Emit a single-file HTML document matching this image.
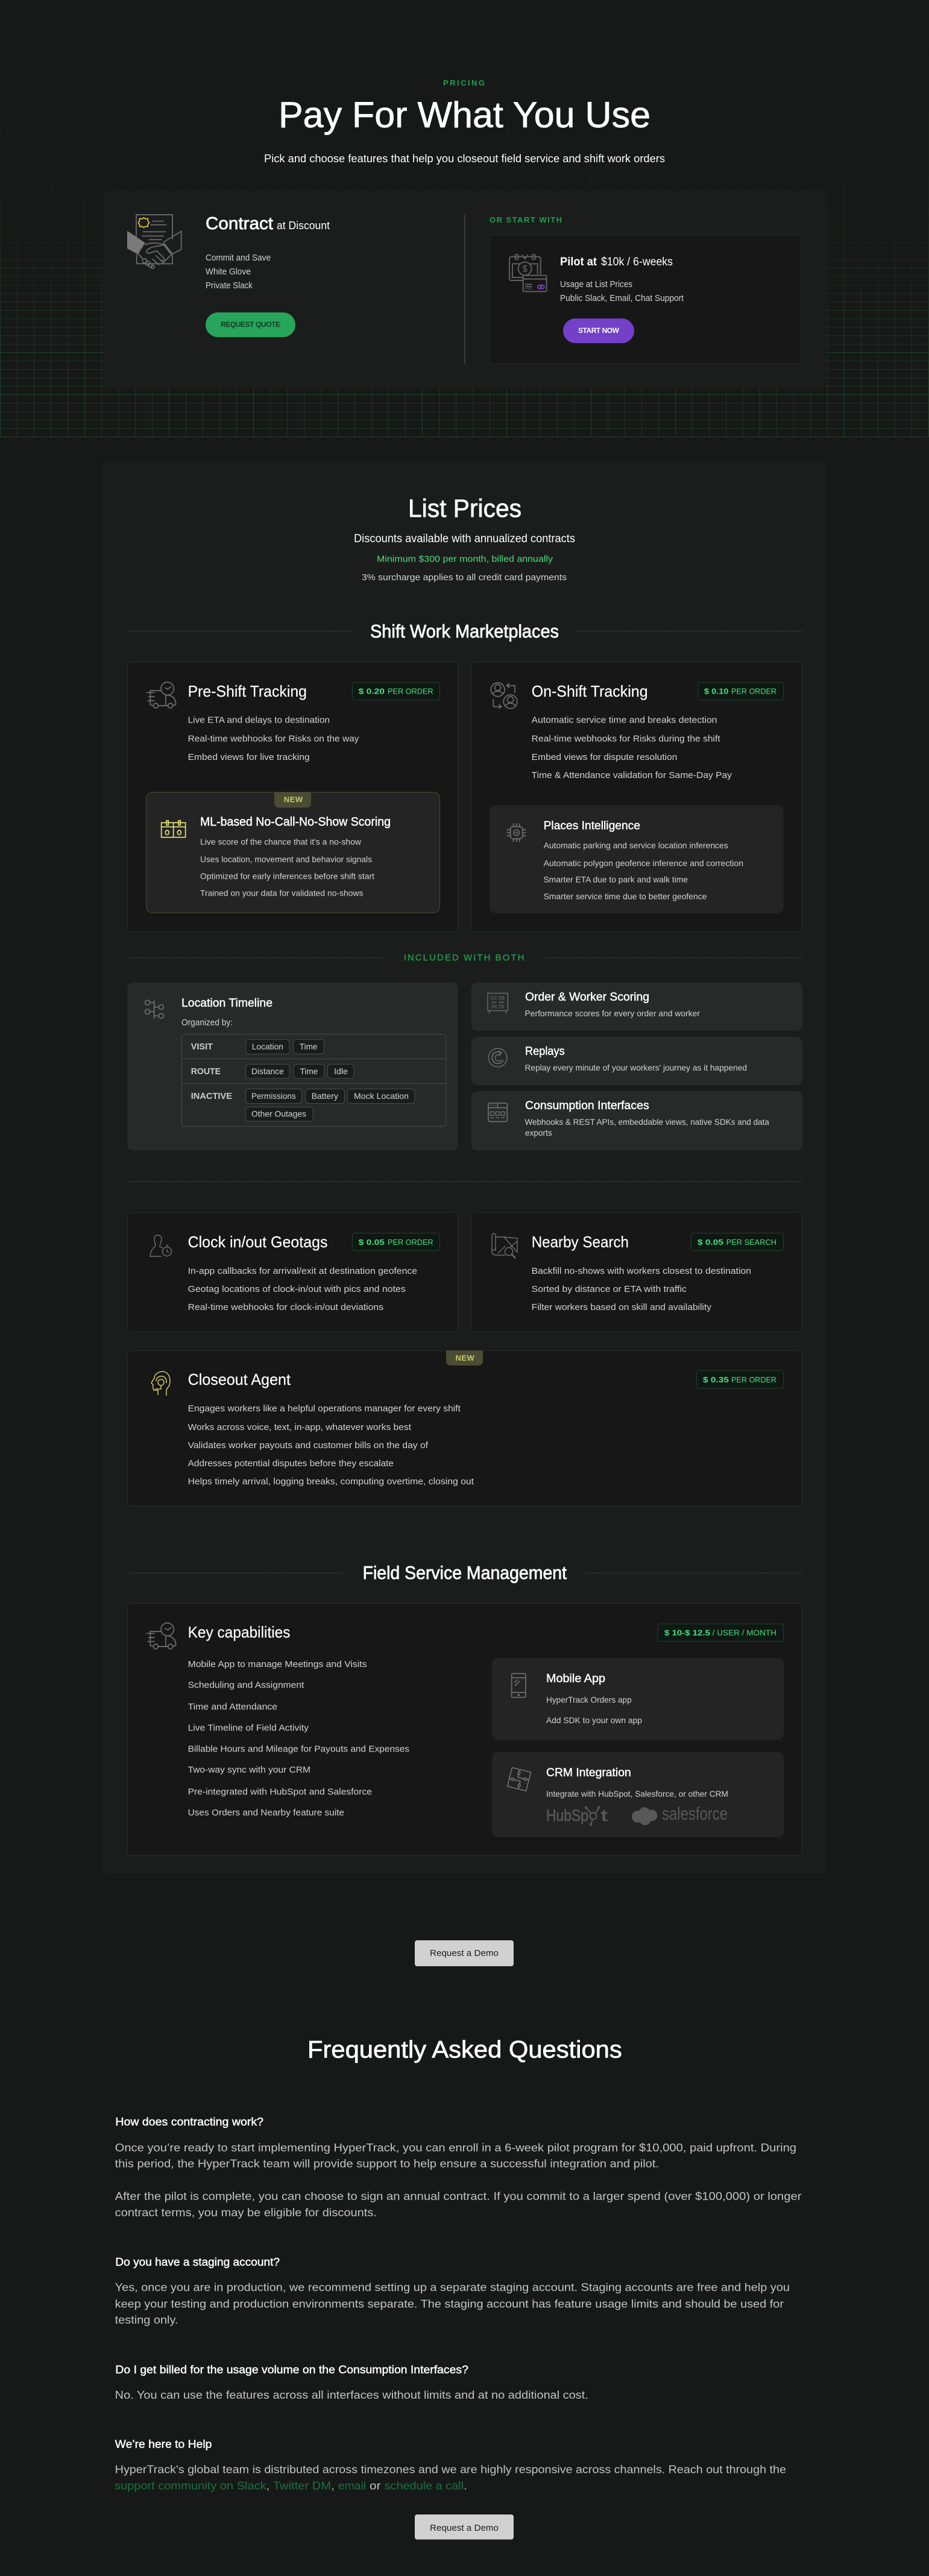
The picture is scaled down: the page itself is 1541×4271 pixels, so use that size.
<!DOCTYPE html>
<html lang="en"><head><meta charset="utf-8"><title>Pricing</title>
<style>
html,body{margin:0;padding:0;background:#161918}
svg{display:block;font-family:"Liberation Sans",sans-serif}
.w{fill:#fff}
.w.f26{stroke:#fff;stroke-width:.2px}
.wm{fill:#fff;stroke:#fff;stroke-width:.45px}
.wl{fill:#fff;stroke:#fff;stroke-width:.75px}
.wb{fill:#fff;font-weight:700}
.l{fill:#d2d2d2}
.p{fill:#c2c4c3}
.g{fill:#1fa04f;font-weight:700}
.gr{fill:#4ade80}
.grb{fill:#4ade80;font-weight:700}
.lk{fill:#1d7040}
.bg{fill:#171717;stroke:#2a2c2b;stroke-width:1}
.bx{fill:#242424}
.bd{fill:#0f1913;stroke:#24402f;stroke-width:1}
.tag{fill:#1b1d1c;stroke:#4a4c4b;stroke-width:1}
.ic{fill:none;stroke:#707070}
.y{fill:none;stroke:#e8e67d}
.dot{stroke:#3d3f3e;stroke-width:1.5;stroke-dasharray:1.5 1.5}
.f15{font-size:15px}.f14{font-size:14px}.f13{font-size:13px}.f18{font-size:18px}.f19{font-size:19px}.f20{font-size:20px}.f26{font-size:26px}.f31{font-size:31px}
</style></head>
<body>
<svg xmlns="http://www.w3.org/2000/svg" width="1541" height="4271" viewBox="0 0 1541 4271">
<defs>
<pattern id="gm" patternUnits="userSpaceOnUse" width="28" height="14" x="0" y="10"><path d="M.5 0V14M0 .5H28" fill="none" stroke="#1c3626" stroke-width="1"/></pattern>
<pattern id="gM" patternUnits="userSpaceOnUse" width="140" height="70" x="0" y="24"><path d="M.5 0V70M0 .5H140" fill="none" stroke="#1e4229" stroke-width="1"/></pattern>
<linearGradient id="fd" x1="0" y1="0" x2="0" y2="1"><stop offset=".12" stop-color="#000"/><stop offset=".5" stop-color="#555"/><stop offset=".85" stop-color="#fff"/></linearGradient>
<mask id="mk" maskUnits="userSpaceOnUse" x="0" y="0" width="1541" height="725"><rect width="1541" height="725" fill="url(#fd)"/></mask>
</defs>
<rect width="1541" height="4271" fill="#161918"/>
<g mask="url(#mk)"><rect width="1541" height="725" fill="url(#gm)"/><rect width="1541" height="725" fill="url(#gM)"/></g>

<!-- HERO -->
<text x="735" y="142" class="g f13" textLength="69" lengthAdjust="spacing">PRICING</text>
<text x="462" y="211" class="wl" font-size="60" textLength="617" lengthAdjust="spacingAndGlyphs">Pay For What You Use</text>
<text x="438" y="269" class="w f18" textLength="665" lengthAdjust="spacingAndGlyphs">Pick and choose features that help you closeout field service and shift work orders</text>

<rect x="172" y="316" width="1198" height="328" rx="6" fill="#1b1d1c"/>
<g transform="translate(190,330) scale(.3333)" class="ic" stroke-width="5">
<path d="M108 215V78H288V200M110 275V322H288V275"/>
<path d="M188 110H245M178 128H258M140 163H255M135 184H245M170 202H235"/>
<path d="M63 158L152 218L117 275L63 246Z" fill="#7a7a7a" stroke="none"/>
<path d="M243 215L332 160V250L285 274"/>
<path d="M243 220L283 272" stroke-width="11"/>
<path d="M150 228C170 218 220 214 243 228C225 235 195 232 175 245C152 258 155 275 178 268C190 262 200 262 210 258L247 295C252 302 240 310 233 305M285 274L235 325M205 280L240 315M188 298L222 328M118 272L140 298"/>
<circle cx="150" cy="308" r="11"/><circle cx="165" cy="320" r="11"/><circle cx="178" cy="330" r="10"/><circle cx="190" cy="338" r="8"/>
<path d="M145 93l9 6 11-2 1 11 6 9-6 9-1 11-11-1-9 6-9-6-11 1-1-11-6-9 6-9 1-11 11 2z" stroke="#e8c93c"/>
</g>
<text x="341" y="380" class="wl" font-size="29" textLength="112" lengthAdjust="spacingAndGlyphs">Contract</text>
<text x="459" y="380" class="w f18" textLength="88" lengthAdjust="spacingAndGlyphs">at Discount</text>
<text x="341" y="432" class="l f15" textLength="108" lengthAdjust="spacingAndGlyphs">Commit and Save</text>
<text x="341" y="455" class="l f15" textLength="75" lengthAdjust="spacingAndGlyphs">White Glove</text>
<text x="341" y="478" class="l f15" textLength="78" lengthAdjust="spacingAndGlyphs">Private Slack</text>
<rect x="341" y="518" width="149" height="41" rx="20.5" fill="#26a55b"/>
<text x="366" y="542" font-size="12" font-weight="700" fill="#0f3d20" textLength="99" lengthAdjust="spacing">REQUEST QUOTE</text>

<rect x="770" y="356" width="1.5" height="248" fill="#454746"/>
<text x="812" y="369" class="g" font-size="13" textLength="120" lengthAdjust="spacing">OR START WITH</text>
<rect x="812.5" y="389.5" width="517" height="214" rx="6" class="bg"/>
<g transform="translate(800,340) scale(.3333)" class="ic" stroke-width="6" style="stroke:#5f5f5f">
<path d="M200 375H147Q135 375 135 363V270Q135 257 147 257H278Q290 257 290 270V345M150 292H275V345M150 292V360H200"/>
<rect x="163" y="245" width="16" height="26" rx="8"/><rect x="248" y="245" width="16" height="26" rx="8"/>
<path d="M197 247L212 268L227 247"/>
<circle cx="212" cy="316" r="33" style="fill:#171717"/>
<rect x="203" y="350" width="117" height="80" rx="5" style="fill:#171717"/>
<path d="M203 368H320M213 395H248M213 406H248M213 417H218M226 417H231M238 417H243"/>
<path d="M212 298V334M222 306C218 299 203 300 203 309C203 320 222 313 222 324C222 333 206 333 202 326" stroke-width="4"/>
<circle cx="285" cy="407" r="9" style="stroke:#7340c8"/><circle cx="299" cy="407" r="9" style="stroke:#7340c8"/>
</g>
<text x="929" y="440" class="wb f19" textLength="61" lengthAdjust="spacingAndGlyphs">Pilot at</text>
<text x="997" y="440" class="w f19" textLength="119" lengthAdjust="spacingAndGlyphs">$10k / 6-weeks</text>
<text x="929" y="476" class="l f15" textLength="120" lengthAdjust="spacingAndGlyphs">Usage at List Prices</text>
<text x="929" y="499" class="l f15" textLength="205" lengthAdjust="spacingAndGlyphs">Public Slack, Email, Chat Support</text>
<rect x="934" y="528" width="118" height="41" rx="20.5" fill="#7340c8"/>
<text x="959" y="552" font-size="12" font-weight="700" fill="#fff" textLength="68" lengthAdjust="spacing">START NOW</text>

<!-- LIST PRICES PANEL -->
<rect x="170" y="764" width="1201" height="2343" rx="6" fill="#1b1d1c"/>
<text x="677" y="857" class="wl" font-size="42" textLength="188" lengthAdjust="spacingAndGlyphs">List Prices</text>
<text x="587" y="899" class="w f19" textLength="367" lengthAdjust="spacingAndGlyphs">Discounts available with annualized contracts</text>
<text x="625" y="931.5" class="gr f15" textLength="292" lengthAdjust="spacingAndGlyphs">Minimum $300 per month, billed annually</text>
<text x="600" y="962" class="l f15" textLength="340" lengthAdjust="spacingAndGlyphs">3% surcharge applies to all credit card payments</text>

<path class="dot" d="M211 1046.5H583M957 1046.5H1331"/>
<text x="614" y="1057" class="wl f31" textLength="313" lengthAdjust="spacingAndGlyphs">Shift Work Marketplaces</text>

<!-- Pre-Shift -->
<rect x="211.5" y="1097.5" width="548" height="447" rx="6" class="bg"/>
<g transform="translate(220,1100) scale(.3333)" class="ic" stroke-width="5">
<circle cx="173" cy="125" r="32"/><path d="M160 120L175 128L192 115"/>
<path d="M142 135H88V205L100 210M165 157V210M68 145H110M78 165H110M72 185H110M127 210H176M165 157C200 157 215 175 215 205L201 210"/>
<circle cx="115" cy="210" r="12"/><circle cx="188" cy="210" r="12"/>
</g>
<text x="311.6" y="1155" class="w f26" textLength="197.4" lengthAdjust="spacingAndGlyphs">Pre-Shift Tracking</text>
<rect x="584.5" y="1131.5" width="145" height="29" rx="4" class="bd"/>
<text x="594.7" y="1150.5" class="grb f13" textLength="43.3" lengthAdjust="spacingAndGlyphs">$ 0.20</text>
<text x="643" y="1150.5" class="gr f13" textLength="75.7" lengthAdjust="spacingAndGlyphs">PER ORDER</text>
<text x="311.6" y="1198.7" class="l f15" textLength="235.4" lengthAdjust="spacingAndGlyphs">Live ETA and delays to destination</text>
<text x="311.6" y="1229.7" class="l f15" textLength="283.9" lengthAdjust="spacingAndGlyphs">Real-time webhooks for Risks on the way</text>
<text x="311.6" y="1260" class="l f15" textLength="202" lengthAdjust="spacingAndGlyphs">Embed views for live tracking</text>

<rect x="242.5" y="1313.5" width="487" height="200" rx="10" class="bx" stroke="#4a4c33"/>
<path d="M455 1313H516V1331Q516 1339 508 1339H463Q455 1339 455 1331Z" fill="#4a4c33"/>
<text x="470.7" y="1330" font-size="13" font-weight="700" fill="#c6c96a" textLength="31.3" lengthAdjust="spacing">NEW</text>
<g transform="translate(220,1100) scale(.3333)" class="y" stroke-width="5">
<rect x="143" y="792" width="120" height="73"/><path d="M203 792V865M143 813H263"/>
<rect x="168" y="782" width="10" height="22"/><rect x="228" y="782" width="10" height="22"/>
<ellipse cx="172" cy="841" rx="9" ry="11"/><ellipse cx="232" cy="841" rx="9" ry="11"/>
</g>
<text x="332" y="1369" class="wm f20" textLength="316" lengthAdjust="spacingAndGlyphs">ML-based No-Call-No-Show Scoring</text>
<text x="332" y="1400.5" class="l f14" textLength="267" lengthAdjust="spacingAndGlyphs">Live score of the chance that it's a no-show</text>
<text x="332" y="1429.6" class="l f14" textLength="285" lengthAdjust="spacingAndGlyphs">Uses location, movement and behavior signals</text>
<text x="332" y="1457.7" class="l f14" textLength="289" lengthAdjust="spacingAndGlyphs">Optimized for early inferences before shift start</text>
<text x="332" y="1485.7" class="l f14" textLength="270.4" lengthAdjust="spacingAndGlyphs">Trained on your data for validated no-shows</text>

<!-- On-Shift -->
<rect x="781.5" y="1097.5" width="549" height="447" rx="6" class="bg"/>
<g transform="translate(800,1100) scale(.3333)" class="ic" stroke-width="5">
<circle cx="77" cy="130" r="34"/><circle cx="77" cy="120" r="15"/><path d="M52 155C56 132 98 132 102 155"/>
<circle cx="140" cy="190" r="34"/><circle cx="140" cy="180" r="15"/><path d="M115 215C119 192 161 192 165 215"/>
<path d="M162 147V110H125M135 98L122 110L135 122M55 175V215H92M82 203L95 215L82 225"/>
</g>
<text x="881.7" y="1155" class="w f26" textLength="192.9" lengthAdjust="spacingAndGlyphs">On-Shift Tracking</text>
<rect x="1157.5" y="1131.5" width="142" height="29" rx="4" class="bd"/>
<text x="1168" y="1150.5" class="grb f13" textLength="40.5" lengthAdjust="spacingAndGlyphs">$ 0.10</text>
<text x="1213" y="1150.5" class="gr f13" textLength="75" lengthAdjust="spacingAndGlyphs">PER ORDER</text>
<text x="881.7" y="1198.7" class="l f15" textLength="307.7" lengthAdjust="spacingAndGlyphs">Automatic service time and breaks detection</text>
<text x="881.7" y="1229.7" class="l f15" textLength="313" lengthAdjust="spacingAndGlyphs">Real-time webhooks for Risks during the shift</text>
<text x="881.7" y="1260" class="l f15" textLength="241.8" lengthAdjust="spacingAndGlyphs">Embed views for dispute resolution</text>
<text x="881.7" y="1290" class="l f15" textLength="332.2" lengthAdjust="spacingAndGlyphs">Time &amp; Attendance validation for Same-Day Pay</text>

<rect x="812" y="1335" width="487.6" height="179" rx="10" class="bx"/>
<g transform="translate(800,1100) scale(.3333)" class="ic" stroke-width="5">
<rect x="140" y="812" width="60" height="60" rx="12"/><circle cx="170" cy="842" r="14"/><path d="M163 842H177"/>
<path d="M155 795V812M170 795V812M185 795V812M155 872V888M170 872V888M185 872V888M122 827H140M122 842H140M122 857H140M200 827H217M200 842H217M200 857H217"/>
</g>
<text x="901.6" y="1375" class="wm f19" textLength="160.4" lengthAdjust="spacingAndGlyphs">Places Intelligence</text>
<text x="901.6" y="1406.6" class="l f14" textLength="306.1" lengthAdjust="spacingAndGlyphs">Automatic parking and service location inferences</text>
<text x="901.6" y="1436" class="l f14" textLength="331.4" lengthAdjust="spacingAndGlyphs">Automatic polygon geofence inference and correction</text>
<text x="901.6" y="1463" class="l f14" textLength="239.4" lengthAdjust="spacingAndGlyphs">Smarter ETA due to park and walk time</text>
<text x="901.6" y="1491" class="l f14" textLength="270.9" lengthAdjust="spacingAndGlyphs">Smarter service time due to better geofence</text>

<!-- Included -->
<path class="dot" d="M211 1588H640M901 1588H1331"/>
<text x="669.7" y="1592.4" font-size="15" fill="#1fa04f" stroke="#1fa04f" stroke-width=".3" textLength="199.8" lengthAdjust="spacing">INCLUDED WITH BOTH</text>

<rect x="211" y="1629" width="549" height="278.5" rx="10" fill="#282a29"/>
<g transform="translate(220,1620) scale(.3333)" class="ic" stroke-width="5">
<path d="M107 115V208M86 127H107M86 172H107M107 149H130M107 193H130"/>
<circle cx="74" cy="127" r="12"/><circle cx="74" cy="172" r="12"/><circle cx="142" cy="149" r="12"/><circle cx="142" cy="193" r="12"/>
</g>
<text x="301" y="1669" class="wm f19" textLength="151" lengthAdjust="spacingAndGlyphs">Location Timeline</text>
<text x="301" y="1700" class="l f15" textLength="85" lengthAdjust="spacingAndGlyphs">Organized by:</text>
<rect x="301.5" y="1714.5" width="438.5" height="153" rx="6" fill="none" stroke="#4a4c4b"/>
<path d="M302 1755.5H740M302 1796.5H740" stroke="#4a4c4b"/>
<text x="316.7" y="1740" class="f15" fill="#ccc" font-weight="700" textLength="36.3" lengthAdjust="spacingAndGlyphs">VISIT</text>
<text x="316.7" y="1781" class="f15" fill="#ccc" font-weight="700" textLength="49.3" lengthAdjust="spacingAndGlyphs">ROUTE</text>
<text x="316.7" y="1822" class="f15" fill="#ccc" font-weight="700" textLength="68.3" lengthAdjust="spacingAndGlyphs">INACTIVE</text>

<rect x="407.5" y="1723.5" width="72.5" height="24" rx="5" class="tag"/><text x="417.7" y="1740" class="l f14" textLength="52.3" lengthAdjust="spacingAndGlyphs">Location</text>
<rect x="486.5" y="1723.5" width="51" height="24" rx="5" class="tag"/><text x="496.8" y="1740" class="l f14" textLength="29.8" lengthAdjust="spacingAndGlyphs">Time</text>
<rect x="407.5" y="1764.5" width="72.5" height="23.5" rx="5" class="tag"/><text x="417" y="1781" class="l f14" textLength="53.8" lengthAdjust="spacingAndGlyphs">Distance</text>
<rect x="487" y="1764.5" width="51" height="23.5" rx="5" class="tag"/><text x="497.5" y="1781" class="l f14" textLength="29.9" lengthAdjust="spacingAndGlyphs">Time</text>
<rect x="543.5" y="1764.5" width="43.5" height="23.5" rx="5" class="tag"/><text x="554" y="1781" class="l f14" textLength="23" lengthAdjust="spacingAndGlyphs">Idle</text>
<rect x="407.5" y="1805.5" width="93" height="24" rx="5" class="tag"/><text x="417" y="1822" class="l f14" textLength="73.7" lengthAdjust="spacingAndGlyphs">Permissions</text>
<rect x="506.5" y="1805.5" width="65" height="24" rx="5" class="tag"/><text x="516.7" y="1822" class="l f14" textLength="44.3" lengthAdjust="spacingAndGlyphs">Battery</text>
<rect x="576.5" y="1805.5" width="111.5" height="24" rx="5" class="tag"/><text x="587" y="1822" class="l f14" textLength="91" lengthAdjust="spacingAndGlyphs">Mock Location</text>
<rect x="407.5" y="1835.5" width="111.5" height="23.5" rx="5" class="tag"/><text x="417" y="1851.7" class="l f14" textLength="91" lengthAdjust="spacingAndGlyphs">Other Outages</text>

<rect x="781.5" y="1629" width="549.5" height="80" rx="10" fill="#282a29"/>
<rect x="781.5" y="1719" width="549.5" height="80" rx="10" fill="#282a29"/>
<rect x="781.5" y="1809" width="549.5" height="98.5" rx="10" fill="#282a29"/>
<g transform="translate(790,1620) scale(.3333)" class="ic" stroke-width="4">
<rect x="57" y="80" width="100" height="87"/><path d="M65 167V182M148 167V182M75 125H100M112 125H138"/>
<text x="71" y="112" font-size="26" fill="#707070" stroke="none" textLength="70" lengthAdjust="spacingAndGlyphs">02:28</text>
<text x="73" y="155" font-size="26" fill="#707070" stroke="none" textLength="66" lengthAdjust="spacingAndGlyphs">38 26</text>
<circle cx="107" cy="401" r="46"/>
<path d="M122 376A29 29 0 1 0 134 412M110 368L125 376L113 392" stroke-width="5"/>
<path d="M118 388A16 16 0 1 0 122 412"/>
<rect x="60" y="627" width="94" height="92" rx="8" stroke-width="5"/><path d="M60 650H154M106 627V650" stroke-width="5"/>
<path d="M70 638H75M81 638H86M92 638H97"/>
<rect x="70" y="670" width="18" height="18" rx="2"/><rect x="97" y="670" width="18" height="18" rx="2"/><rect x="124" y="670" width="18" height="18" rx="2"/>
<path d="M70 700H88M97 700H115M124 700H142"/>
</g>
<text x="871" y="1659" class="wm f19" textLength="206" lengthAdjust="spacingAndGlyphs">Order &amp; Worker Scoring</text>
<text x="870.5" y="1685" class="l f14" textLength="290.5" lengthAdjust="spacingAndGlyphs">Performance scores for every order and worker</text>
<text x="871" y="1749" class="wm f19" textLength="65.7" lengthAdjust="spacingAndGlyphs">Replays</text>
<text x="870.5" y="1775" class="l f14" textLength="368.5" lengthAdjust="spacingAndGlyphs">Replay every minute of your workers' journey as it happened</text>
<text x="871" y="1839" class="wm f19" textLength="205.7" lengthAdjust="spacingAndGlyphs">Consumption Interfaces</text>
<text x="870.5" y="1865" class="l f14" textLength="405.4" lengthAdjust="spacingAndGlyphs">Webhooks &amp; REST APIs, embeddable views, native SDKs and data</text>
<text x="871" y="1883" class="l f14" textLength="44.7" lengthAdjust="spacingAndGlyphs">exports</text>

<path class="dot" d="M211 1959H1331"/>

<!-- Clock -->
<rect x="211.5" y="2010.5" width="548" height="197" rx="6" class="bg"/>
<g class="ic" stroke-width="1.4">
<path d="M256 2053C256 2046 268 2046 268 2054C268 2060 265 2063 265 2067L270 2069M256 2053C256 2060 258 2062 258 2066C254 2069 250 2073 249 2083H268"/>
<circle cx="277" cy="2075" r="7.5"/><path d="M277 2071V2075L280 2077M275 2065H279"/>
</g>
<text x="311.6" y="2068" class="w f26" textLength="231.9" lengthAdjust="spacingAndGlyphs">Clock in/out Geotags</text>
<rect x="584.5" y="2044.5" width="145" height="29" rx="4" class="bd"/>
<text x="594.7" y="2063.8" class="grb f13" textLength="43.3" lengthAdjust="spacingAndGlyphs">$ 0.05</text>
<text x="643" y="2063.8" class="gr f13" textLength="75.7" lengthAdjust="spacingAndGlyphs">PER ORDER</text>
<text x="311.6" y="2112" class="l f15" textLength="380.4" lengthAdjust="spacingAndGlyphs">In-app callbacks for arrival/exit at destination geofence</text>
<text x="311.6" y="2142" class="l f15" textLength="361.2" lengthAdjust="spacingAndGlyphs">Geotag locations of clock-in/out with pics and notes</text>
<text x="311.6" y="2172" class="l f15" textLength="324.4" lengthAdjust="spacingAndGlyphs">Real-time webhooks for clock-in/out deviations</text>

<!-- Nearby -->
<rect x="781.5" y="2010.5" width="549" height="197" rx="6" class="bg"/>
<g class="ic" stroke-width="1.4">
<path d="M816 2048C816 2044 822 2044 822 2048V2074C822 2071 816 2071 816 2075ZM822 2051H836L858 2053V2077M816 2075C816 2080 820 2081 824 2081H838M836 2051L858 2076M858 2058L846 2068M838 2066L826 2078"/>
<circle cx="844" cy="2075" r="6.5"/><path d="M849 2080L855 2086" stroke-width="2.4"/>
</g>
<text x="881.7" y="2068" class="w f26" textLength="161.3" lengthAdjust="spacingAndGlyphs">Nearby Search</text>
<rect x="1146.5" y="2044.5" width="153" height="29" rx="4" class="bd"/>
<text x="1157" y="2063.8" class="grb f13" textLength="43" lengthAdjust="spacingAndGlyphs">$ 0.05</text>
<text x="1204.7" y="2063.8" class="gr f13" textLength="83.3" lengthAdjust="spacingAndGlyphs">PER SEARCH</text>
<text x="881.7" y="2112" class="l f15" textLength="364.3" lengthAdjust="spacingAndGlyphs">Backfill no-shows with workers closest to destination</text>
<text x="881.7" y="2142" class="l f15" textLength="257.2" lengthAdjust="spacingAndGlyphs">Sorted by distance or ETA with traffic</text>
<text x="881.7" y="2172" class="l f15" textLength="298.3" lengthAdjust="spacingAndGlyphs">Filter workers based on skill and availability</text>

<!-- Closeout -->
<rect x="211.5" y="2239.5" width="1119" height="257.5" rx="6" class="bg"/>
<path d="M740 2239H801V2256Q801 2264 793 2264H748Q740 2264 740 2256Z" fill="#4a4c33"/>
<text x="755.5" y="2255.8" font-size="13" font-weight="700" fill="#c6c96a" textLength="31.3" lengthAdjust="spacing">NEW</text>
<g class="y" stroke-width="1.3">
<path d="M262 2313V2305H255Q253 2300 254 2296L251 2293L256 2285C256 2277 265 2274 270 2274C278 2274 282 2282 282 2290C282 2297 279 2300 276 2304V2314"/>
<circle cx="267" cy="2292" r="5"/><path d="M259 2290C259 2279 276 2279 276 2290V2293M267 2297V2303H257"/>
</g>
<text x="311.6" y="2296" class="w f26" textLength="170.4" lengthAdjust="spacingAndGlyphs">Closeout Agent</text>
<rect x="1155.5" y="2272.5" width="144" height="29.5" rx="4" class="bd"/>
<text x="1166" y="2292" class="grb f13" textLength="43" lengthAdjust="spacingAndGlyphs">$ 0.35</text>
<text x="1213" y="2292" class="gr f13" textLength="75" lengthAdjust="spacingAndGlyphs">PER ORDER</text>
<text x="311.6" y="2340" class="l f15" textLength="452.2" lengthAdjust="spacingAndGlyphs">Engages workers like a helpful operations manager for every shift</text>
<text x="311.6" y="2371" class="l f15" textLength="370.4" lengthAdjust="spacingAndGlyphs">Works across voice, text, in-app, whatever works best</text>
<text x="311.6" y="2401" class="l f15" textLength="398.4" lengthAdjust="spacingAndGlyphs">Validates worker payouts and customer bills on the day of</text>
<text x="311.6" y="2431" class="l f15" textLength="341.4" lengthAdjust="spacingAndGlyphs">Addresses potential disputes before they escalate</text>
<text x="311.6" y="2461" class="l f15" textLength="474.4" lengthAdjust="spacingAndGlyphs">Helps timely arrival, logging breaks, computing overtime, closing out</text>

<!-- Field service -->
<path class="dot" d="M211 2608H571M969.7 2608H1331"/>
<text x="601.6" y="2618" class="wl f31" textLength="338.4" lengthAdjust="spacingAndGlyphs">Field Service Management</text>
<rect x="211.5" y="2658.5" width="1119" height="418" rx="6" class="bg"/>
<g transform="translate(220,1560) scale(.3333)" class="ic" stroke-width="5">
<circle cx="173" cy="3425" r="32"/><path d="M160 3420L175 3428L192 3415"/>
<path d="M142 3435H88V3505L100 3510M165 3457V3510M68 3445H110M78 3465H110M72 3485H110M127 3510H176M165 3457C200 3457 215 3475 215 3505L201 3510"/>
<circle cx="115" cy="3510" r="12"/><circle cx="188" cy="3510" r="12"/>
</g>
<text x="311.6" y="2715" class="w f26" textLength="169.9" lengthAdjust="spacingAndGlyphs">Key capabilities</text>
<rect x="1091" y="2692.5" width="208.5" height="29" rx="4" class="bd"/>
<text x="1102" y="2711.7" class="grb f13" textLength="76" lengthAdjust="spacingAndGlyphs">$ 10-$ 12.5</text>
<text x="1181.7" y="2711.7" class="gr f13" textLength="106.3" lengthAdjust="spacingAndGlyphs">/ USER / MONTH</text>
<text x="311.6" y="2763.8" class="l f15" textLength="296.9" lengthAdjust="spacingAndGlyphs">Mobile App to manage Meetings and Visits</text>
<text x="311.6" y="2798.5" class="l f15" textLength="192.8" lengthAdjust="spacingAndGlyphs">Scheduling and Assignment</text>
<text x="311.6" y="2834.7" class="l f15" textLength="148.4" lengthAdjust="spacingAndGlyphs">Time and Attendance</text>
<text x="311.6" y="2869.4" class="l f15" textLength="200.4" lengthAdjust="spacingAndGlyphs">Live Timeline of Field Activity</text>
<text x="311.6" y="2904.6" class="l f15" textLength="367.4" lengthAdjust="spacingAndGlyphs">Billable Hours and Mileage for Payouts and Expenses</text>
<text x="311.6" y="2939" class="l f15" textLength="203.4" lengthAdjust="spacingAndGlyphs">Two-way sync with your CRM</text>
<text x="311.6" y="2975.5" class="l f15" textLength="305.4" lengthAdjust="spacingAndGlyphs">Pre-integrated with HubSpot and Salesforce</text>
<text x="311.6" y="3010" class="l f15" textLength="259.4" lengthAdjust="spacingAndGlyphs">Uses Orders and Nearby feature suite</text>

<rect x="816" y="2749" width="484" height="136" rx="10" class="bx"/>
<rect x="816" y="2905" width="484" height="141" rx="10" class="bx"/>
<g transform="translate(800,2740) scale(.3333)" class="ic" stroke-width="5">
<rect x="146" y="104" width="70" height="119" rx="6"/><path d="M146 125H216M146 198H216M160 150L175 135M163 165L188 140"/>
<circle cx="181" cy="211" r="3" fill="#707070"/>
<g transform="rotate(14 183 630)">
<path d="M135 582H175V590C168 596 168 604 175 610C182 604 182 596 175 590M175 582H231V622H223C217 615 209 615 203 622C209 629 217 629 223 622M231 622V678H191V670C198 664 198 656 191 650C184 656 184 664 191 670M191 678H135V638H143C149 645 157 645 163 638C157 631 149 631 143 638M135 638V582"/>
<path d="M175 610V622H203M191 650V638H163"/>
</g>
</g>
<text x="906" y="2789" class="wm f19" textLength="98" lengthAdjust="spacingAndGlyphs">Mobile App</text>
<text x="906" y="2823" class="l f14" textLength="141.7" lengthAdjust="spacingAndGlyphs">HyperTrack Orders app</text>
<text x="906" y="2857" class="l f14" textLength="159" lengthAdjust="spacingAndGlyphs">Add SDK to your own app</text>
<text x="906" y="2945" class="wm f19" textLength="140.7" lengthAdjust="spacingAndGlyphs">CRM Integration</text>
<text x="906" y="2979" class="l f14" textLength="302" lengthAdjust="spacingAndGlyphs">Integrate with HubSpot, Salesforce, or other CRM</text>
<text x="906" y="3019" font-size="27" fill="#585858" stroke="#585858" stroke-width=".6" textLength="70" lengthAdjust="spacingAndGlyphs">HubSp</text>
<g fill="none" stroke="#585858" stroke-width="2.2"><circle cx="984" cy="3011" r="5.5"/><path d="M980 3006L973 2998M988 3006L993 2998M983 3017L980 3024"/></g>
<circle cx="972" cy="2997" r="2.2" fill="#585858"/><circle cx="993" cy="2997" r="2.2" fill="#585858"/><circle cx="980" cy="3025" r="2.2" fill="#585858"/>
<text x="996.5" y="3019" font-size="27" fill="#585858" stroke="#585858" stroke-width=".6" textLength="11.5" lengthAdjust="spacingAndGlyphs">t</text>
<g fill="#585858"><circle cx="1058" cy="3012" r="10"/><circle cx="1069" cy="3006" r="9.5"/><circle cx="1081" cy="3010" r="9.5"/><circle cx="1070" cy="3016" r="10"/></g>
<text x="1098" y="3017" font-size="30" fill="#585858" textLength="109" lengthAdjust="spacingAndGlyphs">salesforce</text>

<rect x="688" y="3217" width="164" height="43" rx="4" fill="#d1d1d1"/>
<text x="713" y="3243" class="f15" fill="#1c1c1c" textLength="114" lengthAdjust="spacingAndGlyphs">Request a Demo</text>

<!-- FAQ -->
<text x="510" y="3411.5" class="wl" font-size="40" textLength="521.7" lengthAdjust="spacingAndGlyphs">Frequently Asked Questions</text>
<text x="191.4" y="3524" class="wm f18" textLength="245.6" lengthAdjust="spacingAndGlyphs">How does contracting work?</text>
<text x="190.7" y="3567" class="p f18" textLength="1130.3" lengthAdjust="spacingAndGlyphs">Once you’re ready to start implementing HyperTrack, you can enroll in a 6-week pilot program for $10,000, paid upfront. During</text>
<text x="190.7" y="3593.5" class="p f18" textLength="902.3" lengthAdjust="spacingAndGlyphs">this period, the HyperTrack team will provide support to help ensure a successful integration and pilot.</text>
<text x="190.7" y="3647.4" class="p f18" textLength="1138.8" lengthAdjust="spacingAndGlyphs">After the pilot is complete, you can choose to sign an annual contract. If you commit to a larger spend (over $100,000) or longer</text>
<text x="190.7" y="3674.7" class="p f18" textLength="434.3" lengthAdjust="spacingAndGlyphs">contract terms, you may be eligible for discounts.</text>
<text x="191.4" y="3756.4" class="wm f18" textLength="272.6" lengthAdjust="spacingAndGlyphs">Do you have a staging account?</text>
<text x="190.7" y="3798.5" class="p f18" textLength="1119.3" lengthAdjust="spacingAndGlyphs">Yes, once you are in production, we recommend setting up a separate staging account. Staging accounts are free and help you</text>
<text x="190.7" y="3825.8" class="p f18" textLength="1109.3" lengthAdjust="spacingAndGlyphs">keep your testing and production environments separate. The staging account has feature usage limits and should be used for</text>
<text x="190.7" y="3852.4" class="p f18" textLength="104.8" lengthAdjust="spacingAndGlyphs">testing only.</text>
<text x="191.4" y="3934.8" class="wm f18" textLength="585.5" lengthAdjust="spacingAndGlyphs">Do I get billed for the usage volume on the Consumption Interfaces?</text>
<text x="190.7" y="3976.9" class="p f18" textLength="785.2" lengthAdjust="spacingAndGlyphs">No. You can use the features across all interfaces without limits and at no additional cost.</text>
<text x="190.7" y="4058.6" class="wm f18" textLength="160.7" lengthAdjust="spacingAndGlyphs">We’re here to Help</text>
<text x="190.7" y="4100.7" class="p f18" textLength="1113.3" lengthAdjust="spacingAndGlyphs">HyperTrack's global team is distributed across timezones and we are highly responsive across channels. Reach out through the</text>
<text x="190" y="4127.3" class="lk f18" textLength="251.7" lengthAdjust="spacingAndGlyphs">support community on Slack</text>
<text x="442" y="4127.3" class="p f18">,</text>
<text x="453" y="4127.3" class="lk f18" textLength="96" lengthAdjust="spacingAndGlyphs">Twitter DM</text>
<text x="549.5" y="4127.3" class="p f18">,</text>
<text x="561" y="4127.3" class="lk f18" textLength="46" lengthAdjust="spacingAndGlyphs">email</text>
<text x="613" y="4127.3" class="p f18" textLength="18.5" lengthAdjust="spacingAndGlyphs">or</text>
<text x="637.6" y="4127.3" class="lk f18" textLength="131.4" lengthAdjust="spacingAndGlyphs">schedule a call</text>
<text x="769.5" y="4127.3" class="p f18">.</text>
<rect x="688" y="4169" width="164" height="41.5" rx="4" fill="#d1d1d1"/>
<text x="713" y="4196" class="f15" fill="#1c1c1c" textLength="114" lengthAdjust="spacingAndGlyphs">Request a Demo</text>
</svg>
</body></html>
